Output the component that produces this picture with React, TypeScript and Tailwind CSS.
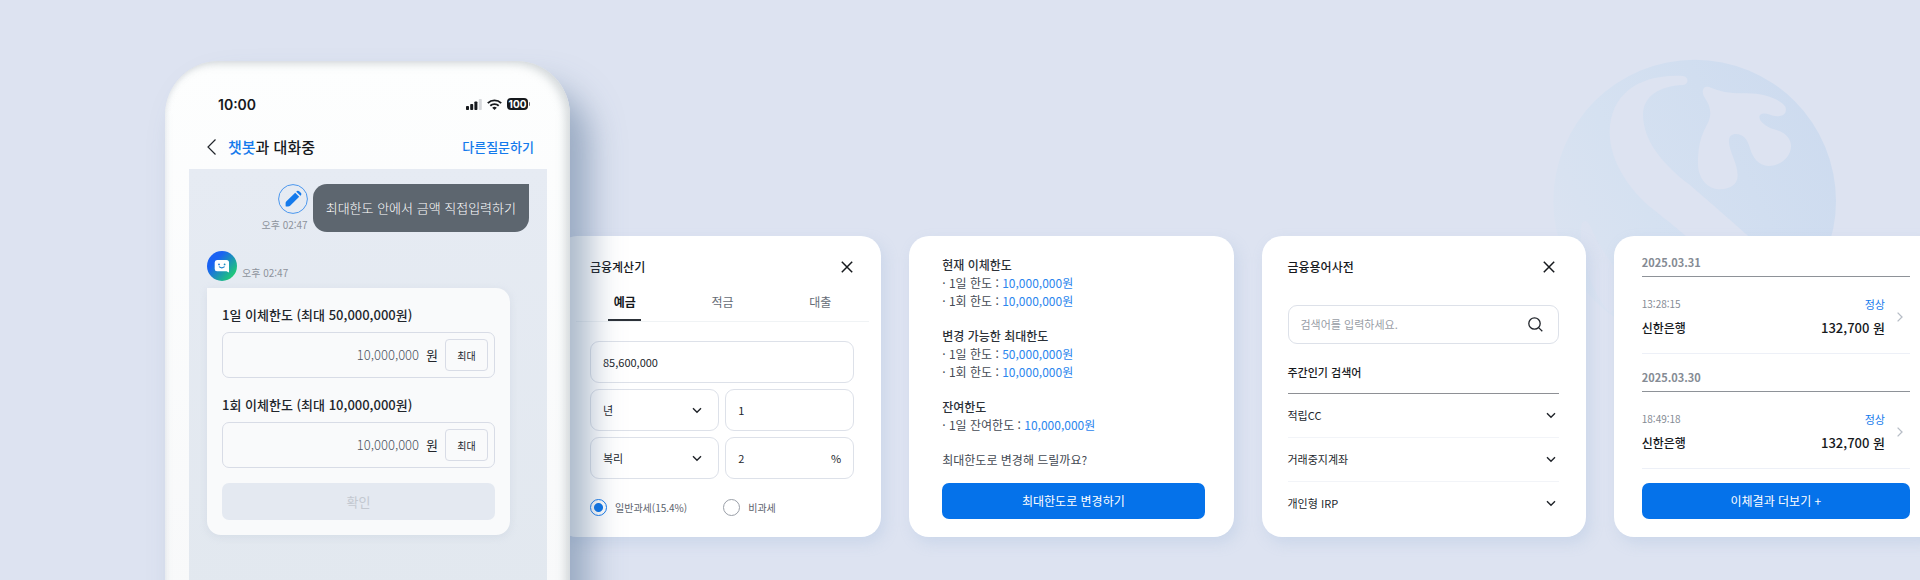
import { useState } from "react";
import type { ReactNode } from "react";

const tabs = ["예금", "적금", "대출"];

const limitGroups = [
  {
    title: "현재 이체한도",
    rows: [
      { label: "· 1일 한도 :", value: "10,000,000원" },
      { label: "· 1회 한도 :", value: "10,000,000원" },
    ],
  },
  {
    title: "변경 가능한 최대한도",
    rows: [
      { label: "· 1일 한도 :", value: "50,000,000원" },
      { label: "· 1회 한도 :", value: "10,000,000원" },
    ],
  },
  {
    title: "잔여한도",
    rows: [{ label: "· 1일 잔여한도 :", value: "10,000,000원" }],
  },
];

const terms = ["적립CC", "거래중지계좌", "개인형 IRP"];

const transfers = [
  { date: "2025.03.31", time: "13:28:15", bank: "신한은행", amount: "132,700 원", status: "정상" },
  { date: "2025.03.30", time: "18:49:18", bank: "신한은행", amount: "132,700 원", status: "정상" },
];

const ChevronDown = ({ className = "" }: { className?: string }) => (
  <svg className={className} width="10" height="7" viewBox="0 0 10 7" fill="none" stroke="#1f2329" strokeWidth="1.4" aria-hidden="true">
    <path d="M1 1.2l4 4 4-4" />
  </svg>
);

const CloseButton = () => (
  <button type="button" aria-label="닫기" className="p-px">
    <svg width="12" height="12" viewBox="0 0 12 12" fill="none" stroke="#16191d" strokeWidth="1.5" aria-hidden="true">
      <path d="M.8.8l10.4 10.4M11.2.8L.8 11.2" />
    </svg>
  </button>
);

const Card = ({ className, children }: { className: string; children: ReactNode }) => (
  <section className={`flex min-w-0 flex-col rounded-[20px] bg-white shadow-[4px_6px_14px_rgba(150,178,215,0.25)] ${className}`}>
    {children}
  </section>
);

// Big faded emblem behind the cards
const Emblem = () => (
  <svg className="absolute right-5 top-[30px] h-[320px] w-[400px]" viewBox="0 0 1200 960" aria-hidden="true">
    <defs>
      <linearGradient id="emblem" x1="0" y1="0.75" x2="1" y2="0.25">
        <stop offset="0" stopColor="#dbe3f1" />
        <stop offset="0.35" stopColor="#d5e1f1" />
        <stop offset="1" stopColor="#cddbef" />
      </linearGradient>
    </defs>
    <circle cx="584" cy="513" r="424" fill="url(#emblem)" />
    <g fill="#dde3f1">
      <path d="M548 138C566 139 568 163 549 165C478 168 430 198 429 254C430 330 484 400 570 465C636 523 700 577 780 650L596 650C540 603 500 570 459 538C390 482 330 396 329 308C330 190 420 132 548 138Z" />
      <path d="M611 175C618 168 628 170 637 175C672 189 700 190 740 190C790 190 838 206 856 230C863 250 848 262 825 258C808 255 792 244 780 255C772 266 790 288 822 298C856 306 874 326 873 350C871 384 838 408 806 408C774 407 757 381 750 355C742 325 727 311 706 312C690 313 684 325 688 345C694 378 712 400 713 438C712 464 690 477 660 478C618 476 593 442 594 396C595 300 630 290 631 250C630 208 599 200 611 175Z" />
      <path d="M245 580C255 566 266 574 272 590C300 660 340 710 400 780L330 850C270 780 230 660 245 580Z" opacity=".6" />
    </g>
  </svg>
);

const StatusIcons = () => (
  <div className="flex items-center gap-[5px]">
    <svg width="16" height="11" viewBox="0 0 16 11" fill="#16191d" aria-hidden="true">
      <rect x="0" y="7" width="3" height="4" rx="0.8" />
      <rect x="4.2" y="5" width="3" height="6" rx="0.8" />
      <rect x="8.4" y="2.5" width="3" height="8.5" rx="0.8" />
      <rect x="12.8" y="0" width="3" height="11" rx="0.8" fill="#d6d8db" />
    </svg>
    <svg width="15" height="11" viewBox="0 0 15 11" fill="none" stroke="#16191d" strokeWidth="1.9" aria-hidden="true">
      <path d="M.8 4.1a9.7 9.7 0 0 1 13.4 0" />
      <path d="M3.3 6.8a6.1 6.1 0 0 1 8.4 0" />
      <path d="M7.5 11L5.2 8.8a3.4 3.4 0 0 1 4.6 0z" fill="#16191d" stroke="none" />
    </svg>
    <div className="flex items-center">
      <span className="flex h-3 w-[21px] items-center justify-center rounded-[4px] bg-[#16191d] font-['Inter',sans-serif] text-[10px] font-bold leading-3 text-white">
        100
      </span>
      <span className="ml-px h-1 w-px rounded-r bg-[#6c7075]" />
    </div>
  </div>
);

const AmountField = ({ id, label }: { id: string; label: string }) => (
  <div>
    <label htmlFor={id} className="block text-[13px] font-medium leading-5 text-[#22262c]">
      {label}
    </label>
    <div className="mt-[7px] flex h-[46px] items-center rounded-[7px] border border-[#d8dce6] pr-1.5">
      <input
        id={id}
        defaultValue="10,000,000"
        inputMode="numeric"
        className="min-w-0 flex-1 bg-transparent text-right text-[13px] font-light text-[#4d545e] outline-none"
      />
      <span className="ml-[7px] text-[13px] text-[#22262c]">원</span>
      <button type="button" className="ml-[7px] h-8 w-[43px] rounded-[4px] border border-[#d8dce6] text-[10px] text-[#22262c]">
        최대
      </button>
    </div>
  </div>
);

const Phone = () => (
  <main className="relative z-10 -mb-5 mt-[61px] flex w-[405px] shrink-0 flex-col rounded-t-[54px] bg-gradient-to-b from-[#fdfefe] to-[#f8f9fa] pl-6 pr-[23px] shadow-[inset_-5px_3px_9px_rgba(170,180,184,0.45),inset_2px_0_5px_rgba(205,213,220,0.35),20px_26px_32px_rgba(88,116,150,0.5)]">
    <div className="mt-[33px] flex h-5 items-center justify-between pl-[29px] pr-[17px]">
      <span className="font-['Inter',sans-serif] text-[14px] font-semibold text-[#16191d]">10:00</span>
      <StatusIcons />
    </div>
    <header className="mt-[11px] flex h-11 items-center pl-[18px] pr-[13px]">
      <button type="button" aria-label="뒤로" className="mr-3">
        <svg width="9" height="16" viewBox="0 0 9 16" fill="none" stroke="#22262c" strokeWidth="1.2" aria-hidden="true">
          <path d="M8.5.5L1 8l7.5 7.5" />
        </svg>
      </button>
      <h1 className="text-[15px] font-medium text-[#16191d]">
        <span className="text-[#147aec]">챗봇</span>과 대화중
      </h1>
      <a href="#ask" className="ml-auto text-[13px] font-medium text-[#147aec]">
        다른질문하기
      </a>
    </header>

    <div className="flex-1 bg-gradient-to-b from-[#e6ebf3] to-[#e2e8ef] px-[18px] pb-11 pt-[15px]">
      <div className="flex justify-end gap-[5px]">
        <div className="flex flex-col items-end">
          <svg width="30" height="30" viewBox="0 0 30 30" aria-hidden="true">
            <circle cx="15" cy="15" r="14.4" fill="none" stroke="#4b97ee" strokeWidth="1" />
            <path d="M8.2 17.4L17.2 8.8L21.2 12.8L12.4 21.5Q11.4 22.6 10 22.6H8.4Q7.6 22.6 7.6 21.7V19Q7.6 18 8.2 17.4Z" fill="#147aec" />
            <path d="M18.3 7.7L18.9 7.1Q20 6.200 21.2 7.2L23 9Q23.9 10.1 23 11.2L22.4 11.8Z" fill="#147aec" />
          </svg>
          <time className="mt-0.5 text-[10px] leading-[18px] text-[#8d939c]">오후 02:47</time>
        </div>
        <p className="flex h-12 items-center rounded-[14px] rounded-tr-none bg-[#5d666f] px-[13px] text-[13px] font-light text-white">
          최대한도 안에서 금액 직접입력하기
        </p>
      </div>

      <div className="mt-[17px] flex items-end gap-[5px]">
        <svg width="30" height="30" viewBox="0 0 30 30" aria-hidden="true">
          <defs>
            <linearGradient id="bot" x1="0.1" y1="0.2" x2="0.9" y2="0.9">
              <stop offset="0.2" stopColor="#1a62f3" />
              <stop offset="0.9" stopColor="#1fc57c" />
            </linearGradient>
          </defs>
          <circle cx="15" cy="15" r="15" fill="url(#bot)" />
          <path d="M10 9H19.5Q22 9 22 11.5V21.5L19.5 20.3H10Q7.7 20.3 7.7 18V11.5Q7.7 9 10 9Z" fill="#fff" />
          <circle cx="12" cy="13.4" r="0.9" fill="#1a78d8" />
          <circle cx="17.6" cy="13.4" r="0.9" fill="#1a8fc0" />
          <path d="M12.4 15.9Q14.8 17.8 17.2 15.9" fill="none" stroke="#1a84cc" strokeWidth="1.2" strokeLinecap="round" />
        </svg>
        <time className="text-[10px] leading-4 text-[#8d939c]">오후 02:47</time>
      </div>

      <form className="mr-[19px] mt-[7px] rounded-[14px] rounded-tl-none bg-[#f9fafb] px-[15px] pb-[15px] pt-[17px] shadow-[0_2px_8px_rgba(160,175,195,0.2)]">
        <div className="flex flex-col gap-[17px]">
          <AmountField id="daily" label="1일 이체한도 (최대 50,000,000원)" />
          <AmountField id="once" label="1회 이체한도 (최대 10,000,000원)" />
        </div>
        <button type="button" className="mt-[15px] h-[37px] w-full rounded-[7px] bg-[#e4e9f1] text-[13px] text-[#c3c8d0]">
          확인
        </button>
      </form>
    </div>
  </main>
);

const CalculatorCard = () => {
  const [tab, setTab] = useState("예금");
  const field = "h-[42px] w-full rounded-[9px] border border-[#dde1e9] bg-transparent px-3 text-[11px] text-[#22262c] outline-none";
  const radio =
    "size-[17px] appearance-none rounded-full border border-[#9a9fa8] checked:border-[#147aec] checked:bg-[radial-gradient(circle,#0572ea_0_4px,transparent_5px)]";

  return (
    <Card className="pb-[21px] pl-[33px] pr-[27px] pt-5">
      <div className="flex h-[22px] items-center justify-between">
        <h2 className="text-[12px] font-medium text-[#16191d]">금융계산기</h2>
        <CloseButton />
      </div>
      <div role="tablist" className="-ml-[14px] -mr-[15px] mt-1.5 grid h-[38px] grid-cols-3 border-b border-[#f0f3f5]">
        {tabs.map((name) => (
          <button
            key={name}
            type="button"
            role="tab"
            aria-selected={tab === name}
            onClick={() => setTab(name)}
            className={`mx-auto w-[33px] whitespace-nowrap border-b-2 text-[12px] ${
              tab === name ? "border-[#2c3138] font-bold text-[#16191d]" : "border-transparent text-[#656c76]"
            }`}
          >
            {name}
          </button>
        ))}
      </div>
      <div className="mt-[19px] grid grid-cols-2 gap-1.5">
        <input aria-label="금액" defaultValue="85,600,000" className={`col-span-2 ${field}`} />
        <div className="relative">
          <select aria-label="기간 단위" className={`appearance-none ${field}`}>
            <option>년</option>
            <option>월</option>
          </select>
          <ChevronDown className="pointer-events-none absolute right-[17px] top-[18px]" />
        </div>
        <input aria-label="기간" defaultValue="1" className={field} />
        <div className="relative">
          <select aria-label="이자 계산" className={`appearance-none ${field}`}>
            <option>복리</option>
            <option>단리</option>
          </select>
          <ChevronDown className="pointer-events-none absolute right-[17px] top-[18px]" />
        </div>
        <label className={`flex items-center ${field}`}>
          <input aria-label="이율" defaultValue="2" className="min-w-0 flex-1 outline-none" />
          <span>%</span>
        </label>
      </div>
      <div className="mt-[19px] flex h-[18px] gap-9 text-[10px] text-[#5b626c]">
        <label className="flex items-center gap-2">
          <input type="radio" name="tax" defaultChecked className={radio} />
          일반과세(15.4%)
        </label>
        <label className="flex items-center gap-2">
          <input type="radio" name="tax" className={radio} />
          비과세
        </label>
      </div>
    </Card>
  );
};

const LimitCard = () => (
  <Card className="pb-[18px] pl-[33px] pr-[29px] pt-5">
    <div className="flex flex-col gap-[17px] text-[12px] leading-[18px] text-[#454b54]">
      {limitGroups.map((group) => (
        <div key={group.title}>
          <h2 className="font-medium text-[#2c3138]">{group.title}</h2>
          {group.rows.map((row) => (
            <p key={row.label}>
              {row.label} <span className="text-[#2b86ee]">{row.value}</span>
            </p>
          ))}
        </div>
      ))}
      <p>최대한도로 변경해 드릴까요?</p>
    </div>
    <button type="button" className="mt-[14px] h-9 rounded-[7px] bg-[#0572ea] text-[12px] text-white">
      최대한도로 변경하기
    </button>
  </Card>
);

const DictionaryCard = () => (
  <Card className="pb-[11px] pl-[26px] pr-[27px] pt-5">
    <div className="flex h-[22px] items-center justify-between pr-[3px]">
      <h2 className="text-[12px] font-medium text-[#16191d]">금융용어사전</h2>
      <CloseButton />
    </div>
    <div className="mt-[27px] flex h-[39px] items-center rounded-[9px] border border-[#dde1e9] pl-3 pr-[15px]">
      <input
        aria-label="검색어"
        placeholder="검색어를 입력하세요."
        className="min-w-0 flex-1 bg-transparent text-[11px] outline-none placeholder:text-[#989da6]"
      />
      <button type="button" aria-label="검색">
        <svg width="15" height="15" viewBox="0 0 15 15" fill="none" stroke="#22262c" strokeWidth="1.3" aria-hidden="true">
          <circle cx="6.5" cy="6.5" r="5.7" />
          <path d="M10.6 10.6L14.3 14.2" />
        </svg>
      </button>
    </div>
    <h3 className="mt-[19px] border-b border-[#8e9095] pb-3 text-[11px] font-medium leading-[18px] text-[#16191d]">주간인기 검색어</h3>
    <ul>
      {terms.map((term) => (
        <li key={term} className="border-b border-[#f2f4f8] last:border-transparent">
          <button type="button" className="flex h-[43px] w-full items-center justify-between pr-[3px] text-[11px] text-[#22262c]">
            {term}
            <ChevronDown />
          </button>
        </li>
      ))}
    </ul>
  </Card>
);

const TransferCard = () => (
  <Card className="pb-[18px] pl-7 pr-7 pt-[17px]">
    <ul className="flex flex-col gap-[14px]">
      {transfers.map((item) => (
        <li key={item.date} className="border-b border-[#edf0f7]">
          <h3 className="border-b border-[#8e9298] pb-[5px] text-[11px] font-bold leading-[18px] text-[#858b94]">{item.date}</h3>
          <a href="#detail" className="flex items-center gap-3 pb-[14px] pr-[7px] pt-[18px]">
            <div className="flex-1">
              <p className="flex justify-between leading-[18px]">
                <span className="text-[10px] text-[#858b94]">{item.time}</span>
                <span className="text-[11px] text-[#147aec]">{item.status}</span>
              </p>
              <p className="mt-1 flex justify-between leading-[22px] text-[#16191d]">
                <span className="text-[12px] font-medium">{item.bank}</span>
                <span className="text-[13px] font-medium">{item.amount}</span>
              </p>
            </div>
            <svg width="6" height="10" viewBox="0 0 6 10" fill="none" stroke="#b7bdc6" strokeWidth="1.3" aria-hidden="true">
              <path d="M.6.6L5 5L.6 9.4" />
            </svg>
          </a>
        </li>
      ))}
    </ul>
    <button type="button" className="mt-[14px] h-9 rounded-[7px] bg-[#0572ea] text-[12px] text-white">
      이체결과 더보기 +
    </button>
  </Card>
);

const App = () => {
  return (
    <div className="relative flex min-h-screen overflow-hidden bg-[#dde3f1] pl-[165px] font-['Noto_Sans_CJK_KR',sans-serif]" lang="ko">
      <Emblem />
      <Phone />
      <div className="relative -ml-[13px] -mr-[18px] mt-[236px] grid min-w-0 flex-1 grid-cols-4 gap-7 self-start">
        <CalculatorCard />
        <LimitCard />
        <DictionaryCard />
        <TransferCard />
      </div>
    </div>
  );
};

export default App;
